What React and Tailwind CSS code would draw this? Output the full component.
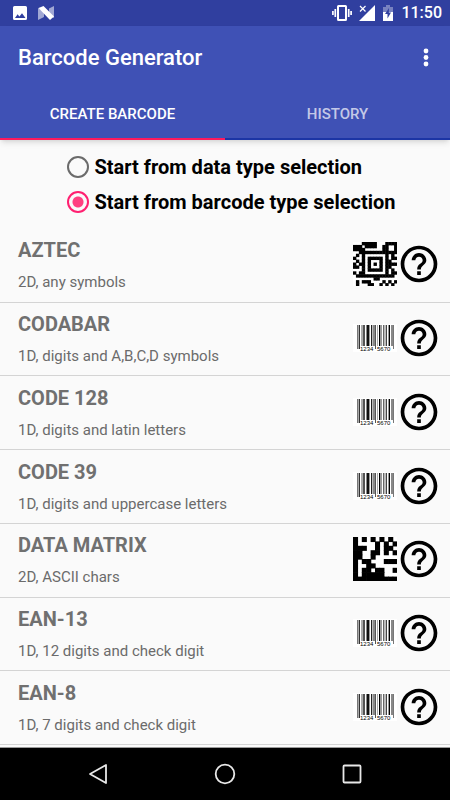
import React, { useState } from 'react';
import { MdHelpOutline } from 'react-icons/md';

const barcodeTypes = [
  { name: 'AZTEC', description: '2D, any symbols', icon: 'aztec' },
  { name: 'CODABAR', description: '1D, digits and A,B,C,D symbols', icon: 'linear' },
  { name: 'CODE 128', description: '1D, digits and latin letters', icon: 'linear' },
  { name: 'CODE 39', description: '1D, digits and uppercase letters', icon: 'linear' },
  { name: 'DATA MATRIX', description: '2D, ASCII chars', icon: 'datamatrix' },
  { name: 'EAN-13', description: '1D, 12 digits and check digit', icon: 'linear' },
  { name: 'EAN-8', description: '1D, 7 digits and check digit', icon: 'linear' },
];

const AZTEC = [
  '000111110001111',
  '111011110011001',
  '111100000011001',
  '001111111111111',
  '010100000001010',
  '100101111101011',
  '010101000101100',
  '101101010101111',
  '110101000101100',
  '000101111101010',
  '101100000001011',
  '011111111111110',
  '000000011000000',
  '010111000010101',
  '010001100101010',
];

const DATA_MATRIX = [
  '1010101010',
  '1000010101',
  '1110010110',
  '1100110101',
  '1100100000',
  '1011000111',
  '1001100000',
  '1011011001',
  '1011111000',
  '1111111111',
];

// x, width, colour of every bar
const BARS = [
  [4, 1, '#777'], [5, 1, '#aaa'], [6, 1, '#333'], [8, 2, '#aaa'], [10, 2, '#555'], [13, 1, '#888'],
  [14, 2, '#111'], [16, 1, '#999'], [18, 1, '#222'], [19, 1, '#bbb'], [20, 2, '#888'], [22, 1, '#555'],
  [24, 1, '#aaa'], [26, 1, '#000'], [27, 2, '#999'], [30, 1, '#666'], [31, 2, '#bbb'],
  [33, 1, '#444'], [35, 1, '#999'], [36, 1, '#000'], [38, 2, '#888'], [40, 1, '#777'],
];

function Matrix({ rows }) {
  return (
    <svg className="size-11" viewBox={`0 0 ${rows.length} ${rows.length}`}>
      <rect width={rows.length} height={rows.length} fill="#fff" />
      {rows.map((row, y) =>
        row.split('').map((cell, x) => cell === '1' && <rect key={`${x}-${y}`} x={x} y={y} width="1.15" height="1.15" />)
      )}
    </svg>
  );
}

function LinearBarcode() {
  return (
    <svg className="size-11" viewBox="0 0 44 44">
      <rect y="8" width="44" height="28" fill="#fff" />
      {BARS.map(([x, width, fill]) => (
        <rect key={x} x={x} y="9" width={width} height={x < 7 || x === 22 || x > 38 ? 24 : 21} fill={fill} />
      ))}
      <text x="7" y="35" fontSize="6" fontFamily="Liberation Sans, sans-serif">1234</text>
      <text x="24" y="35" fontSize="6" fontFamily="Liberation Sans, sans-serif">5670</text>
    </svg>
  );
}

function TypeIcon({ icon }) {
  if (icon === 'aztec') return <Matrix rows={AZTEC} />;
  if (icon === 'datamatrix') return <Matrix rows={DATA_MATRIX} />;
  return <LinearBarcode />;
}

function StatusBar() {
  return (
    <div className="flex h-[26px] items-center justify-between bg-[#303f9f] pl-3 pr-2 text-white">
      <div className="flex items-center gap-2.5">
        <svg className="size-4" viewBox="0 0 16 16" fill="currentColor">
          <path fillRule="evenodd" d="M2.5 1h11Q15 1 15 2.5v11q0 1.500-1.500 1.500h-11Q1 15 1 13.500v-11Q1 1 2.500 1zM3 13h10.500L10 8.200l-2.600 3.300L5.600 9.300z" />
        </svg>
        <svg className="size-4" viewBox="0 0 16 16" fill="currentColor">
          <path d="M0 3v12l6-3V6zM16 1v12l-5-3V3.500z" opacity="0.55" />
          <path d="M0.500 3L5.500 1 16 11.500 12 15z" />
        </svg>
      </div>
      <div className="flex items-center gap-[7px]">
        <svg className="h-4 w-5" viewBox="0 0 20 16" fill="none" stroke="currentColor">
          <rect x="6" y="1" width="8" height="14" rx="0.500" strokeWidth="2" />
          <path d="M3.300 4v8M16.700 4v8M0.900 6v4M19.100 6v4" strokeWidth="1.700" />
        </svg>
        <svg className="size-4" viewBox="0 0 16 16">
          <path d="M16 0v16H0z" fill="currentColor" />
          <path d="M0 0h8v8H0z" fill="#303f9f" />
          <path d="M1 1l5.500 5.500M6.500 1L1 6.500" stroke="currentColor" strokeWidth="1.200" />
        </svg>
        <svg className="h-4 w-3" viewBox="0 0 12 16" fill="currentColor">
          <path d="M1 2h3V0h4v2h3v5H1z" opacity="0.35" />
          <path d="M1 7h10v9H1z" />
          <path d="M7 3L3 9h2.500v4.500L9 7.500H6.800z" fill="#303f9f" />
        </svg>
        <span className="text-base leading-5 font-medium">11:50</span>
      </div>
    </div>
  );
}

function App() {
  const [tab, setTab] = useState('create');
  const [mode, setMode] = useState('barcode');

  const tabs = [
    { id: 'create', label: 'CREATE BARCODE' },
    { id: 'history', label: 'HISTORY' },
  ];

  const modes = [
    { id: 'data', label: 'Start from data type selection' },
    { id: 'barcode', label: 'Start from barcode type selection' },
  ];

  return (
    <div className="flex min-h-screen flex-col bg-[#fafafa] font-['Roboto',sans-serif]">
      <StatusBar />

      <header className="bg-[#3f51b5] text-white shadow-md">
        <div className="flex h-16 items-center justify-between pl-[18px] pr-3">
          <h1 className="text-[22px] leading-7 font-medium">Barcode Generator</h1>
          <button type="button" aria-label="More options" className="flex h-8 w-6 items-center justify-center">
            <svg className="h-5 w-2" viewBox="0 0 8 20" fill="currentColor">
              <circle cx="4" cy="3" r="2.400" />
              <circle cx="4" cy="9.500" r="2.400" />
              <circle cx="4" cy="16" r="2.400" />
            </svg>
          </button>
        </div>
        <nav className="grid h-[50px] grid-cols-2">
          {tabs.map(({ id, label }) => (
            <button
              key={id}
              type="button"
              onClick={() => setTab(id)}
              className={`border-b-2 text-[15px] leading-5 font-medium ${tab === id ? 'border-[#ff1a5e] text-white' : 'border-[#1c35a5] text-white/70'}`}
            >
              {label}
            </button>
          ))}
        </nav>
      </header>

      <fieldset className="flex flex-col items-center pt-[9px] pr-4 pb-2.5 pl-7">
        <div className="flex flex-col">
          {modes.map(({ id, label }) => (
            <label key={id} className="flex h-[35px] items-center gap-1.5 text-xl font-bold text-black">
              <input
                type="radio"
                name="mode"
                checked={mode === id}
                onChange={() => setMode(id)}
                className="size-[22px] appearance-none rounded-full border-2 border-[#6b6b6b] checked:border-[#ff1f70] checked:bg-[radial-gradient(circle,#ff4081_5px,transparent_6px)]"
              />
              {label}
            </label>
          ))}
        </div>
      </fieldset>

      <ul className="mb-0.5 flex grow flex-col">
        {barcodeTypes.map(({ name, description, icon }) => (
          <li key={name} className="flex flex-1 items-center justify-between border-b border-[#d4d4d4] pl-[18px] pr-[9px]">
            <div className="flex flex-col gap-2.5">
              <h2 className="text-xl leading-6 font-bold text-[#707070]">{name}</h2>
              <p className="text-[15px] leading-5 text-[#6b6b6b]">{description}</p>
            </div>
            <div className="flex shrink-0 pb-0.5">
              <TypeIcon icon={icon} />
              <button type="button" aria-label={`About ${name}`}>
                <MdHelpOutline className="size-11 text-black" />
              </button>
            </div>
          </li>
        ))}
      </ul>

      <nav className="flex h-[53px] justify-center border-t border-[#9a9a9a] bg-black text-[#e8e8e8]">
        <button type="button" aria-label="Back" className="flex w-[127px] items-center justify-center">
          <svg className="size-6" viewBox="0 0 24 24" fill="none" stroke="currentColor" strokeWidth="1.800" strokeLinejoin="round">
            <path d="M20 3v18L4 12z" />
          </svg>
        </button>
        <button type="button" aria-label="Home" className="flex w-[127px] items-center justify-center">
          <svg className="size-6" viewBox="0 0 24 24" fill="none" stroke="currentColor" strokeWidth="1.800">
            <circle cx="12" cy="12" r="9.300" />
          </svg>
        </button>
        <button type="button" aria-label="Recent apps" className="flex w-[127px] items-center justify-center">
          <svg className="size-6" viewBox="0 0 24 24" fill="none" stroke="currentColor" strokeWidth="1.800">
            <rect x="3.500" y="3.500" width="17" height="17" rx="1" />
          </svg>
        </button>
      </nav>
    </div>
  );
}

export default App;
